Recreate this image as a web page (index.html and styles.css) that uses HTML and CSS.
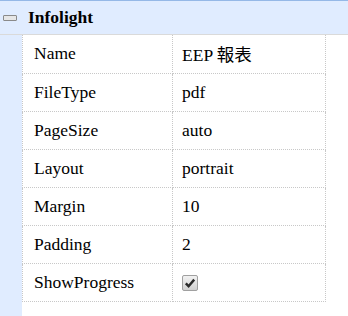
FILE: index.html
```html
<!DOCTYPE html>
<html lang="en">
  <head>
    <meta charset="UTF-8" />
    <title>Property Grid</title>
    <link rel="stylesheet" href="styles.css">
  </head>
  <body>
    <div class="group-header">
      <span class="collapse-icon"></span>
      <span class="group-title">Infolight</span>
    </div>
    <div class="group-body">
      <div class="indent"></div>
      <div class="grid-wrap">
        <table class="prop-grid">
          <tr><td class="prop-name">Name</td><td class="prop-value">EEP 報表</td></tr>
          <tr><td class="prop-name">FileType</td><td class="prop-value">pdf</td></tr>
          <tr><td class="prop-name">PageSize</td><td class="prop-value">auto</td></tr>
          <tr><td class="prop-name">Layout</td><td class="prop-value">portrait</td></tr>
          <tr><td class="prop-name">Margin</td><td class="prop-value">10</td></tr>
          <tr><td class="prop-name">Padding</td><td class="prop-value">2</td></tr>
          <tr>
            <td class="prop-name">ShowProgress</td>
            <td class="prop-value">
              <span class="check-box">
                <svg width="12" height="12" viewBox="0 0 12 12">
                  <path d="M1.8 6.4 L4.6 9.2 L10.2 2.6" fill="none" stroke="#2a2a2a" stroke-width="2.4" />
                </svg>
              </span>
            </td>
          </tr>
        </table>
      </div>
    </div>
  </body>
</html>
```

FILE: styles.css
```css
html, body {
  height: 100%;
}

body {
  margin: 0;
  font-family: "Liberation Serif", "Noto Sans CJK TC", serif;
  font-size: 17.5px;
  color: #000;
  background: #fff;
  display: flex;
  flex-direction: column;
}

.group-header {
  height: 33px;
  flex: none;
  border-top: 1px solid #95b8e7;
  border-bottom: 1px solid #dadada;
  background: #e0ecff;
  display: flex;
  align-items: center;
  padding-left: 3px;
}

.collapse-icon {
  width: 12px;
  height: 4px;
  border: 1px solid #8a8a8a;
  border-radius: 1px;
  background: #e6e6e6;
  margin-right: 11px;
}

.group-title {
  font-weight: bold;
}

.group-body {
  flex: 1;
  display: flex;
}

.indent {
  width: 22px;
  background: #e0ecff;
}

.grid-wrap {
  flex: 1;
  background: #fff;
}

.prop-grid {
  border-collapse: collapse;
  width: 304px;
}

.prop-grid td {
  border: 1px dotted #c8c8c8;
  height: 38px;
  padding: 0 0 0 11px;
  box-sizing: border-box;
}

.prop-grid tr:first-child td {
  border-top: none;
}

.prop-name {
  width: 150px;
}

.prop-grid td.prop-value {
  padding-left: 9px;
}

.check-box {
  display: inline-flex;
  align-items: center;
  justify-content: center;
  width: 14px;
  height: 14px;
  border: 1px solid #a0a0a0;
  border-radius: 2px;
  background: linear-gradient(#f2f2f2, #d0d0d0);
  vertical-align: middle;
}
```
